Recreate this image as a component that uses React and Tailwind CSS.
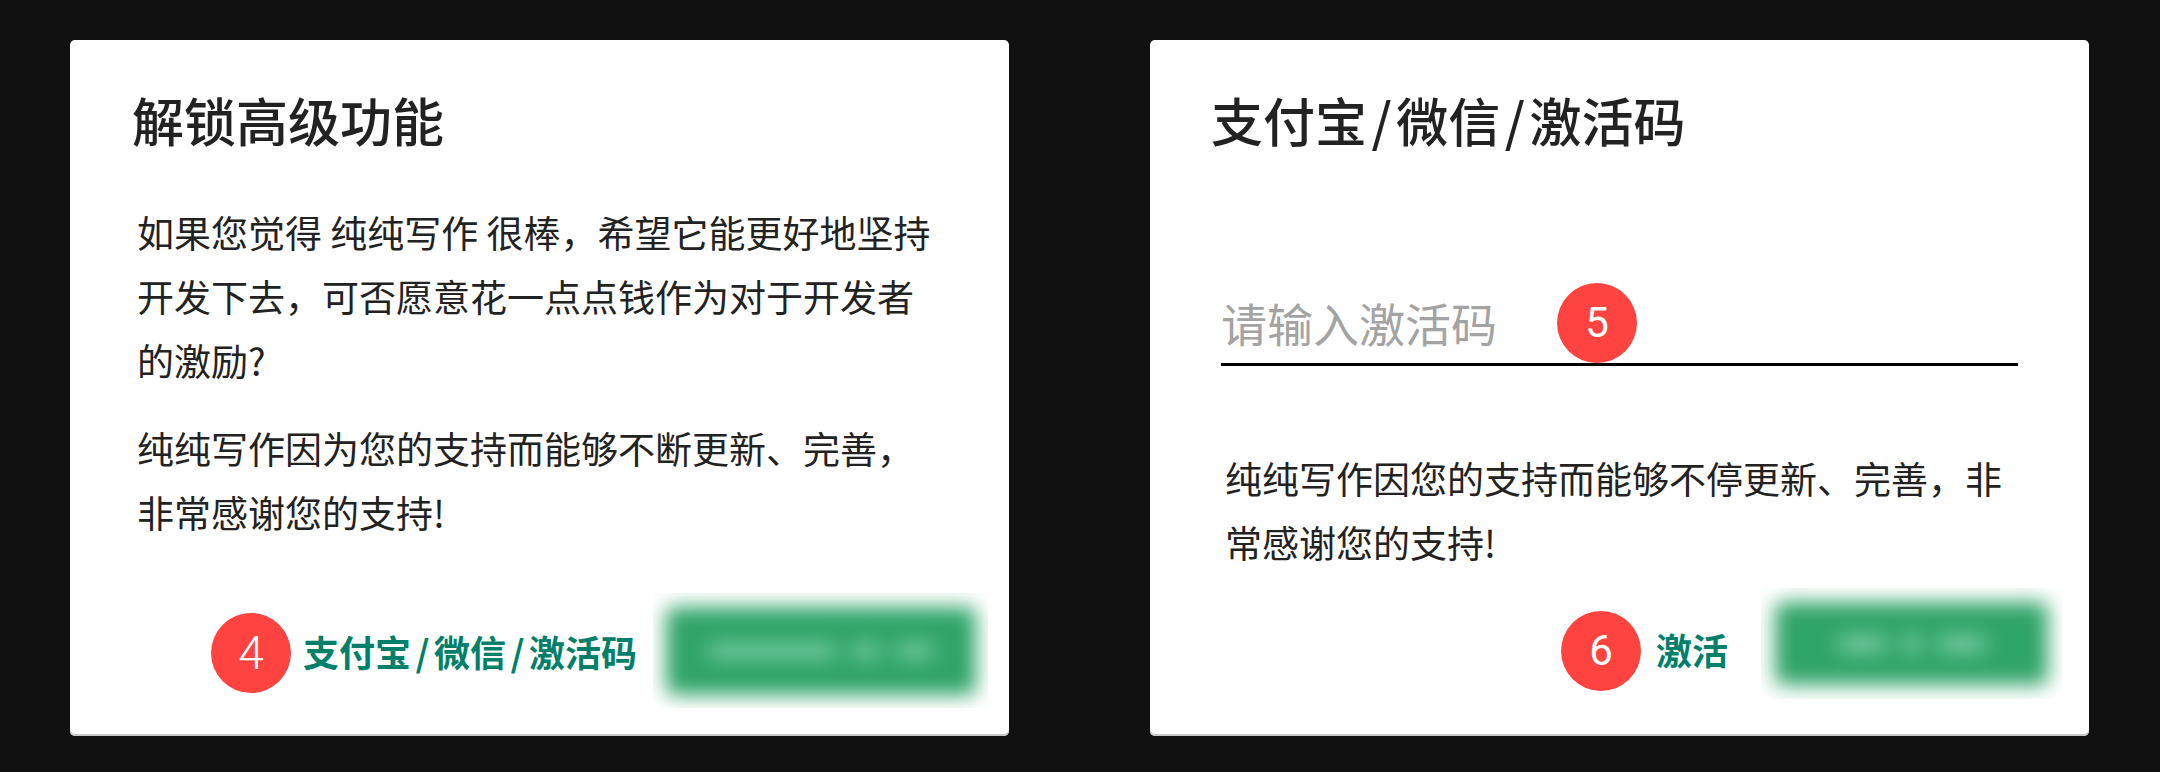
import React from "react";

const CJK = { fontFamily: '"Noto Sans CJK SC", "Noto Sans", sans-serif' };
const NUM = { fontFamily: 'Roboto, "Liberation Sans", sans-serif' };

function Badge({ n, className = "" }) {
  return (
    <div
      className={`w-[80px] h-[80px] rounded-full bg-[#fe4340] text-white flex items-center justify-center text-[42px] leading-none shrink-0 ${className}`}
      style={NUM}
    >
      {n}
    </div>
  );
}

function Slash() {
  return <span className="px-[4.5px]">/</span>;
}

function BlurButton({ outerW, outerH, btnW, btnH, bars }) {
  return (
    <div className={`${outerW} ${outerH} overflow-hidden bg-white flex items-center justify-center shrink-0`}>
      <div className={`${btnW} ${btnH} shrink-0 rounded-[8px] bg-[#2fa468] blur-[10px] flex items-center justify-center gap-[14px]`}>
        {bars}
      </div>
    </div>
  );
}

export default function App() {
  return (
    <div className="w-[2160px] h-[772px] bg-[#111111] flex gap-[141px] pl-[70px] pt-[40px]" style={CJK}>
      {/* Left card */}
      <div className="w-[939px] h-[696px] bg-white rounded-[5px] shadow-[inset_0_-2px_0_#c8c8c8] flex flex-col">
        <h1 className="pl-[62px] pt-[54px] text-[52px] leading-[52px] font-medium text-[#222222]">解锁高级功能</h1>
        <div className="pl-[67px] mt-[54px] text-[37px] leading-[64px] text-[#222222]">
          <p>
            如果您觉得 纯纯写作 很棒，希望它能更好地坚持
            <br />
            开发下去，可否愿意花一点点钱作为对于开发者
            <br />
            的激励?
          </p>
          <p className="mt-[24px]">
            纯纯写作因为您的支持而能够不断更新、完善，
            <br />
            非常感谢您的支持!
          </p>
        </div>
        <div className="mt-[49px] flex items-center justify-end pr-[21px]">
          <Badge n="4" className="mt-[5px] font-light text-[46px]" />
          <span className="ml-[12px] mr-[16px] text-[36px] leading-none font-bold text-[#00806a]">
            支付宝<Slash />微信<Slash />激活码
          </span>
          <BlurButton
            outerW="w-[335px]"
            outerH="h-[115px]"
            btnW="w-[310px]"
            btnH="h-[88px]"
            bars={
              <>
                <div className="w-[130px] h-[14px] rounded-full bg-[#7fcfa7]" />
                <div className="w-[30px] h-[14px] rounded-full bg-[#7fcfa7]" />
                <div className="w-[40px] h-[14px] rounded-full bg-[#7fcfa7]" />
              </>
            }
          />
        </div>
      </div>

      {/* Right card */}
      <div className="w-[939px] h-[696px] bg-white rounded-[5px] shadow-[inset_0_-2px_0_#c8c8c8] flex flex-col">
        <h1 className="pl-[61px] pt-[54px] text-[52px] leading-[52px] font-medium text-[#222222]">
          支付宝<Slash />微信<Slash />激活码
        </h1>
        <div className="relative mx-[71px] mt-[153px]">
          <input
            placeholder="请输入激活码"
            className="block w-full h-[67px] pt-0 pb-[18px] text-[46px] leading-[46px] border-b-[3px] border-black outline-none bg-transparent placeholder:text-[#a3a3a3]"
            style={CJK}
          />
          <Badge n="5" className="absolute left-[336px] top-[-16px] text-[40px]" />
        </div>
        <p className="pl-[75px] mt-[80px] text-[37px] leading-[64px] text-[#222222]">
          纯纯写作因您的支持而能够不停更新、完善，非
          <br />
          常感谢您的支持!
        </p>
        <div className="mt-[14px] flex items-center justify-end pr-[27px]">
          <Badge n="6" className="mt-[14px] text-[42px]" />
          <span className="ml-[15px] mr-[33px] mt-[10px] text-[36px] leading-none font-bold text-[#00806a]">激活</span>
          <BlurButton
            outerW="w-[301px]"
            outerH="h-[111px]"
            btnW="w-[273px]"
            btnH="h-[83px]"
            bars={
              <>
                <div className="w-[50px] h-[16px] rounded-full bg-[#7fcfa7]" />
                <div className="w-[22px] h-[16px] rounded-full bg-[#7fcfa7]" />
                <div className="w-[50px] h-[16px] rounded-full bg-[#7fcfa7]" />
              </>
            }
          />
        </div>
      </div>
    </div>
  );
}
